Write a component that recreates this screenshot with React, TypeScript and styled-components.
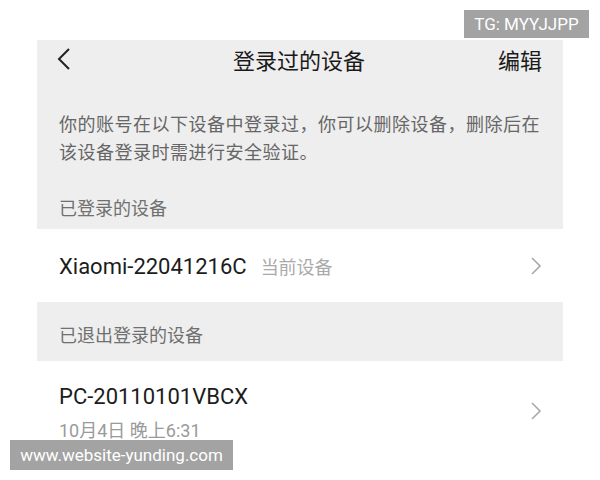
import React from 'react'
import styled, { createGlobalStyle } from 'styled-components'

const GlobalStyle = createGlobalStyle`
  html, body {
    margin: 0;
    padding: 0;
    background: #ffffff;
  }
  body {
    font-family: Roboto, "Noto Sans CJK SC", "Noto Sans", sans-serif;
  }
`

const Page = styled.div`
  position: relative;
  width: 600px;
  height: 480px;
  overflow: hidden;
  background: #ffffff;
  padding-top: 40px;
  box-sizing: border-box;
`

const Screen = styled.div`
  margin-left: 37px;
  width: 526px;
  height: 440px;
  background: #eeeeee;
  display: flex;
  flex-direction: column;
`

const NavBar = styled.div`
  height: 38px;
  display: grid;
  grid-template-columns: 1fr auto 1fr;
  align-items: center;
  padding: 0 21px 0 19px;
`

const BackButton = styled.div`
  display: flex;
  align-items: center;
`

const Title = styled.div`
  font-size: 22px;
  font-weight: 400;
  color: #1a1a1a;
  font-family: "Noto Sans CJK SC", sans-serif;
`

const EditButton = styled.div`
  justify-self: end;
  font-size: 22px;
  color: #1a1a1a;
  font-family: "Noto Sans CJK SC", sans-serif;
`

const Description = styled.p`
  margin: 31px 0 0;
  padding: 0 22px;
  font-size: 18px;
  letter-spacing: 0.5px;
  line-height: 28px;
  color: #666666;
  font-family: "Noto Sans CJK SC", sans-serif;
`

const SectionLabel = styled.div<{ $top: number; $bottom: number }>`
  padding: ${(p) => p.$top}px 22px ${(p) => p.$bottom}px;
  font-size: 18px;
  line-height: 28px;
  color: #707070;
  font-family: "Noto Sans CJK SC", sans-serif;
`

const DeviceRow = styled.div`
  height: 73px;
  background: #ffffff;
  display: flex;
  align-items: center;
  padding: 0 22px;
  box-sizing: border-box;
`

const LastRow = styled(DeviceRow)`
  height: auto;
  flex: 1;
  align-items: flex-start;
  padding-top: 23px;
`

const DeviceInfo = styled.div`
  flex: 1;
  display: flex;
  flex-direction: column;
  gap: 7px;
`

const NameLine = styled.div`
  display: flex;
  align-items: baseline;
  gap: 14px;
`

const DeviceName = styled.span`
  font-size: 22px;
  color: #1c1c1c;
`

const Tag = styled.span`
  font-size: 18px;
  color: #aaaaaa;
  font-family: "Noto Sans CJK SC", sans-serif;
`

const TimeText = styled.span`
  font-size: 18px;
  color: #9a9a9a;
  font-family: Roboto, "Noto Sans CJK SC", sans-serif;
`

const Chevron = styled.div<{ $offset?: number }>`
  display: flex;
  align-items: center;
  margin-right: -1px;
  margin-top: ${(p) => p.$offset ?? 0}px;
`

const Watermark = styled.div<{ $pos: 'top' | 'bottom' }>`
  position: absolute;
  background: #a3a3a3;
  color: #ffffff;
  font-family: Roboto, "Liberation Sans", sans-serif;
  font-size: 17px;
  display: flex;
  align-items: center;
  justify-content: center;
  ${(p) =>
    p.$pos === 'top'
      ? 'left: 464px; top: 10px; width: 125px; height: 28px;'
      : 'left: 10px; top: 440px; width: 223px; height: 30px;'}
`

const BackIcon = () => (
  <svg width="16" height="24" viewBox="0 0 16 24">
    <path d="M13 2 L3 12 L13 22" fill="none" stroke="#222" strokeWidth="2" />
  </svg>
)

const ArrowIcon = () => (
  <svg width="12" height="18" viewBox="0 0 12 18">
    <path d="M2 1 L10 9 L2 17" fill="none" stroke="#a8a8a8" strokeWidth="1.6" />
  </svg>
)

export default function App() {
  return (
    <>
      <GlobalStyle />
      <Page>
        <Screen>
          <NavBar>
            <BackButton>
              <BackIcon />
            </BackButton>
            <Title>登录过的设备</Title>
            <EditButton>编辑</EditButton>
          </NavBar>
          <Description>
            你的账号在以下设备中登录过，你可以删除设备，删除后在该设备登录时需进行安全验证。
          </Description>
          <SectionLabel $top={28} $bottom={8}>
            已登录的设备
          </SectionLabel>
          <DeviceRow>
            <DeviceInfo>
              <NameLine>
                <DeviceName>Xiaomi-22041216C</DeviceName>
                <Tag>当前设备</Tag>
              </NameLine>
            </DeviceInfo>
            <Chevron>
              <ArrowIcon />
            </Chevron>
          </DeviceRow>
          <SectionLabel $top={18} $bottom={13}>
            已退出登录的设备
          </SectionLabel>
          <LastRow>
            <DeviceInfo>
              <DeviceName>PC-20110101VBCX</DeviceName>
              <TimeText>10月4日 晚上6:31</TimeText>
            </DeviceInfo>
            <Chevron $offset={18}>
              <ArrowIcon />
            </Chevron>
          </LastRow>
        </Screen>
        <Watermark $pos="top">TG: MYYJJPP</Watermark>
        <Watermark $pos="bottom">www.website-yunding.com</Watermark>
      </Page>
    </>
  )
}
